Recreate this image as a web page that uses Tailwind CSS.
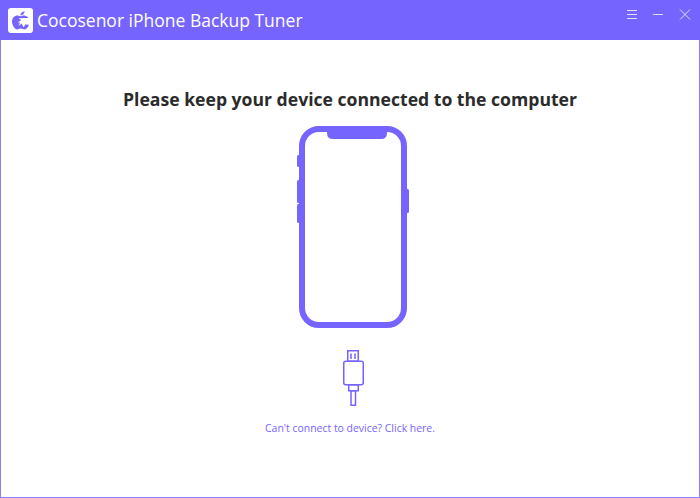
<!DOCTYPE html>
<html lang="en">
<head>
    <meta charset="UTF-8">
    <title>Cocosenor iPhone Backup Tuner</title>
    <script src="https://cdn.jsdelivr.net/npm/@tailwindcss/browser@4"></script>
</head>
<body class="bg-white">
    <div class="w-[700px] h-[498px] flex flex-col overflow-hidden font-['Open_Sans',sans-serif]">
        <!-- title bar -->
        <div class="h-[40px] shrink-0 bg-[#7664ff] flex items-center pl-[8px]">
            <svg class="w-[25px] h-[25px] shrink-0" viewBox="0 0 25 25">
                <rect width="25" height="25" rx="3" fill="#fff"/>
                <path d="M12.2 7.4C12.6 5.2 14 3.6 16.6 3.2C16.5 5.6 15 7.3 12.2 7.4Z" fill="#7664ff"/>
                <path d="M8 7.7C9.8 7.2 11 8.2 12.5 8.2C14 8.2 15.4 7.2 17.2 7.7C18.6 8.1 19.6 8.9 20.3 9.9L15 9.9L10.6 10.6L13.2 12.2L9.6 14.6L12 14.4L10.6 18L13.6 15.4L15.6 19.4L17.2 16.4L21 16.8C20.1 19.2 18.4 21.4 16.6 21.4C15.2 21.4 14.2 20.6 12.7 20.6C11.2 20.6 10.2 21.4 8.9 21.4C6.7 21.4 4 17.1 4 13.3C4 10.3 5.6 8.4 8 7.7Z" fill="#7664ff"/>
            </svg>
            <span class="ml-[4px] text-[17.5px] leading-[24px] text-white whitespace-nowrap">Cocosenor iPhone Backup Tuner</span>
            <div class="ml-auto self-start mt-[9px] flex">
                <svg class="w-[12px] h-[12px]" viewBox="0 0 12 12" stroke="#e4dfff" stroke-width="1" fill="none">
                    <path d="M1 1.5H11M1 5.5H11M1 9.5H11"/>
                </svg>
                <svg class="w-[12px] h-[12px] ml-[14px]" viewBox="0 0 12 12" stroke="#e4dfff" stroke-width="1" fill="none">
                    <path d="M1 5.5H11"/>
                </svg>
                <svg class="w-[12px] h-[12px] ml-[15px] mr-[9px]" viewBox="0 0 12 12" stroke="#e4dfff" stroke-width="1" fill="none">
                    <path d="M1 0.5L11 10.5M11 0.5L1 10.5"/>
                </svg>
            </div>
        </div>
        <!-- content -->
        <div class="flex-1 flex flex-col items-center border-x border-b border-[#8f80ff]">
            <h1 class="mt-[47px] text-[17.6px] leading-[24px] font-bold text-[#2b2b2b] whitespace-nowrap">Please keep your device connected to the computer</h1>
            <svg class="mt-[15px] ml-[6px] w-[114px] h-[202px]" viewBox="0 0 114 202" fill="#7664ff">
                <rect x="1" y="29" width="4" height="12" rx="1.5"/>
                <rect x="1" y="54" width="4" height="23" rx="1.5"/>
                <rect x="1" y="78" width="4" height="19" rx="1.5"/>
                <rect x="109" y="63" width="4" height="24" rx="1.5"/>
                <rect x="6" y="3" width="102" height="196" rx="17" fill="#fff" stroke="#7664ff" stroke-width="6"/>
                <path d="M31 2H91V7Q91 13 85 13H37Q31 13 31 7Z"/>
            </svg>
            <svg class="mt-[22px] ml-[8px] w-[24px] h-[56px]" viewBox="0 0 24 56" fill="none" stroke="#7664ff" stroke-width="1.5">
                <rect x="5.75" y="0.75" width="10.5" height="10.5"/>
                <path d="M9 3.5V9M13 3.5V9"/>
                <rect x="1.75" y="11.25" width="19.5" height="23.5" rx="2"/>
                <rect x="6.75" y="34.75" width="9.5" height="6"/>
                <rect x="9" y="40.75" width="4.5" height="14.5"/>
            </svg>
            <a href="#" class="mt-[14px] text-[10.45px] leading-[16px] text-[#7664ff] whitespace-nowrap">Can't connect to device? Click here.</a>
        </div>
    </div>
</body>
</html>
